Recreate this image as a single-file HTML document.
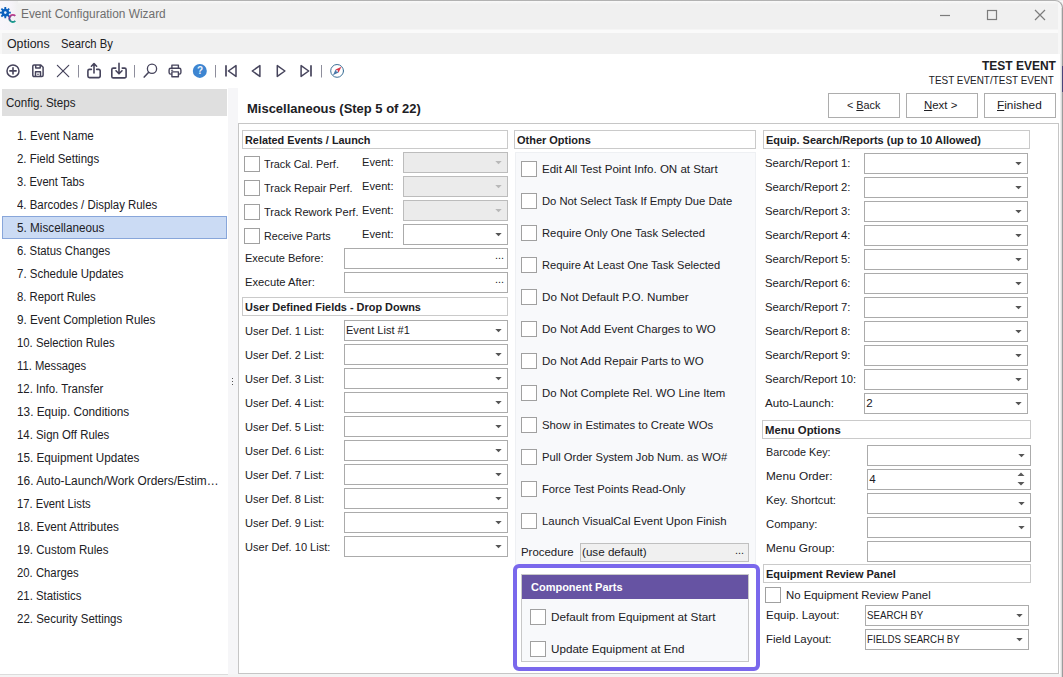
<!DOCTYPE html>
<html lang="en"><head><meta charset="utf-8"><title>Event Configuration Wizard</title>
<style>
html,body{margin:0;padding:0;background:#fff;}
body{width:1063px;height:677px;position:relative;overflow:hidden;font-family:"Liberation Sans", sans-serif;}
.b{position:absolute;box-sizing:border-box;}
.t{position:absolute;white-space:nowrap;transform-origin:0 0;line-height:16px;height:16px;color:#202024;font-family:"Liberation Sans", sans-serif;}
u{text-decoration:underline;text-underline-offset:1px;}
</style></head><body>
<div class="b" style="left:0px;top:0px;width:1063px;height:677px;background:#ffffff;"></div>
<div class="b" style="left:0px;top:0px;width:1063px;height:30px;background:#f0f0f0;"></div>
<div class="b" style="left:0px;top:1px;width:1063px;height:3px;background:linear-gradient(180deg,#f9f9f9,#f1f1f1);"></div>
<div class="b" style="left:0px;top:29px;width:1063px;height:1px;background:#f5f5f5;"></div>
<div class="b" style="left:0px;top:30px;width:1063px;height:3px;background:#fafafa;"></div>
<div class="b" style="left:0px;top:33px;width:1063px;height:21px;background:#f0f0f0;"></div>
<div class="b" style="left:0px;top:33px;width:2px;height:21px;background:#f8f8f8;"></div>
<span class="t" style="top:6px;font-size:12px;color:#6e6e6e;left:21.1px;transform:scaleX(0.9907);">Event Configuration Wizard</span>
<span class="t" style="top:36px;font-size:12px;left:6.8px;transform:scaleX(1.0301);">Options</span>
<span class="t" style="top:36px;font-size:12px;left:60.6px;transform:scaleX(0.9357);">Search By</span>
<div class="b" style="left:0px;top:1px;width:18px;height:29px;background:linear-gradient(90deg,#f8f6fb 0,#f6f4f9 60%,#f0f0f0 100%);"></div>
<svg class="b" style="left:0;top:0" width="18" height="26" viewBox="0 0 18 26">
<defs><linearGradient id="cg" x1="0" y1="0" x2="0" y2="1"><stop offset="0" stop-color="#c0408c"/><stop offset="0.5" stop-color="#5a3c90"/><stop offset="1" stop-color="#15a08c"/></linearGradient></defs>
<path d="M4.41 7.07L6.19 7.07L6.26 8.82L7.29 9.25L8.58 8.06L9.84 9.32L8.65 10.61L9.08 11.64L10.83 11.71L10.83 13.49L9.08 13.56L8.65 14.59L9.84 15.88L8.58 17.14L7.29 15.95L6.26 16.38L6.19 18.13L4.41 18.13L4.34 16.38L3.31 15.95L2.02 17.14L0.76 15.88L1.95 14.59L1.52 13.56L-0.23 13.49L-0.23 11.71L1.52 11.64L1.95 10.61L0.76 9.32L2.02 8.06L3.31 9.25L4.34 8.82z" fill="#0b5fbd"/><circle cx="5.3" cy="12.6" r="1.300" fill="#e8f2ff"/>
<path d="M15.300 15.900a3.500 3.500 0 1 0 0 5" fill="none" stroke="url(#cg)" stroke-width="2"/>
</svg>
<svg class="b" style="left:930px;top:4px" width="125" height="22" viewBox="0 0 125 22" fill="none" stroke="#7c7c7c" stroke-width="1.2">
<path d="M10 11.5h10"/><rect x="57.5" y="6.5" width="9" height="9"/><path d="M105 6l10 10M115 6l-10 10"/></svg>
<svg class="b" style="left:0;top:56px" width="360" height="30" viewBox="0 0 360 30" fill="none" stroke="#46445c" stroke-width="1.5" stroke-linejoin="round" stroke-linecap="round">
<circle cx="13" cy="14.9" r="6"/><path d="M13 11.8v6.200M9.900 14.900h6.200" stroke-width="1.600"/>
<path d="M34 9h6.800l2.300 2.300v8a1.200 1.200 0 0 1-1.200 1.200h-7.900a1.200 1.200 0 0 1-1.200-1.200v-9.100a1.200 1.200 0 0 1 1.200-1.200zM35.700 9.200v2.700h4.500v-2.700M35.500 20.300v-4.500h5v4.500" stroke-linecap="butt"/>
<circle cx="38" cy="18.300" r="0.800" fill="#46445c" stroke="none"/>
<path d="M57.400 9.300l11.300 11.400M68.700 9.300l-11.300 11.400" stroke-width="1.200"/>
<path d="M78.500 9v12.500M134.500 9v12.500M215.500 9v12.500M321.500 9v12.500" stroke="#8e8e9c" stroke-width="1" stroke-linecap="butt"/>
<path d="M91.400 13.400H89.400a1.500 1.500 0 0 0-1.500 1.500V20.100a1.500 1.500 0 0 0 1.500 1.500H98.700a1.500 1.500 0 0 0 1.500-1.500V14.900a1.500 1.500 0 0 0-1.500-1.500H96.700M94 17V8M91.400 10.200L94 7.600l2.600 2.600" stroke-width="1.600"/>
<path d="M115.800 12.100H113.300a1.500 1.500 0 0 0-1.500 1.500V20.400a1.500 1.500 0 0 0 1.500 1.500H124.600a1.500 1.500 0 0 0 1.500-1.500V13.600a1.500 1.500 0 0 0-1.500-1.500H122.200M119 7.300V17.500M116 14.800l3 3 3-3" stroke-width="1.600"/>
<circle cx="152" cy="12.700" r="4.600" stroke-width="1.300"/><path d="M148.700 16.200l-4.500 4.900" stroke-width="1.500"/>
<path d="M171.900 12.200V9.100h6.500v3.100" stroke-width="1.400"/>
<rect x="169.100" y="12.300" width="11.800" height="5.800" rx="1.600" stroke-width="1.400"/>
<rect x="171.900" y="15.900" width="6.500" height="4.800" fill="#fff" stroke-width="1.400"/>
<path d="M171.500 14.300h1.200" stroke-width="1.100"/>
<circle cx="199.800" cy="14.900" r="7" fill="#3d85d1" stroke="none"/>
<path d="M226 9.200v11.400" stroke-width="1.700" stroke-linecap="butt"/><path d="M236 9.600v10.800l-7.600-5.400z"/>
<path d="M259.900 9.600v10.800l-7.600-5.400z"/>
<path d="M277.300 9.600v10.800l7.600-5.400z"/>
<path d="M301.100 9.600v10.800l7.600-5.400z"/><path d="M311 9.200v11.400" stroke-width="1.700" stroke-linecap="butt"/>
<circle cx="337.100" cy="14.900" r="6.400" stroke="#3b6f96" stroke-width="1"/>
<path d="M341.400 10.700l-5.800 2.700 3 3z" fill="#d8384a" stroke="none"/><path d="M332.900 19.200l2.700-5.800 3 3z" fill="#4a78a8" stroke="none"/>
<circle cx="337.100" cy="14.900" r="0.800" fill="#fff" stroke="none"/>
</svg>
<span class="t" style="top:62.6px;font-size:10px;color:#eef4fb;left:196.9px;font-weight:bold;">?</span>
<span class="t" style="top:57.5px;font-size:12.8px;right:7.5px;transform-origin:100% 0;font-weight:bold;transform:scaleX(0.9376);">TEST EVENT</span>
<span class="t" style="top:72px;font-size:11.6px;right:9px;transform-origin:100% 0;transform:scaleX(0.8573);">TEST EVENT/TEST EVENT</span>
<div class="b" style="left:2px;top:89px;width:225px;height:27px;background:#dfdfdf;"></div>
<span class="t" style="top:95px;font-size:12px;left:5.9px;transform:scaleX(0.9646);">Config. Steps</span>
<div class="b" style="left:2px;top:216px;width:225px;height:23px;background:#cbdbf4;border:1px solid #88a6da;"></div>
<span class="t" style="top:128px;font-size:12px;left:16.9px;transform:scaleX(0.9676);">1. Event Name</span>
<span class="t" style="top:151px;font-size:12px;left:16.9px;transform:scaleX(0.9542);">2. Field Settings</span>
<span class="t" style="top:174px;font-size:12px;left:16.9px;transform:scaleX(0.9284);">3. Event Tabs</span>
<span class="t" style="top:197px;font-size:12px;left:16.9px;transform:scaleX(0.9512);">4. Barcodes / Display Rules</span>
<span class="t" style="top:220px;font-size:12px;left:16.9px;transform:scaleX(0.9779);">5. Miscellaneous</span>
<span class="t" style="top:243px;font-size:12px;left:16.9px;transform:scaleX(0.9440);">6. Status Changes</span>
<span class="t" style="top:266px;font-size:12px;left:16.9px;transform:scaleX(0.9559);">7. Schedule Updates</span>
<span class="t" style="top:289px;font-size:12px;left:16.9px;transform:scaleX(0.9428);">8. Report Rules</span>
<span class="t" style="top:312px;font-size:12px;left:16.9px;transform:scaleX(0.9742);">9. Event Completion Rules</span>
<span class="t" style="top:335px;font-size:12px;left:16.9px;transform:scaleX(0.9440);">10. Selection Rules</span>
<span class="t" style="top:358px;font-size:12px;left:16.9px;transform:scaleX(0.9375);">11. Messages</span>
<span class="t" style="top:381px;font-size:12px;left:16.9px;transform:scaleX(0.9513);">12. Info. Transfer</span>
<span class="t" style="top:404px;font-size:12px;left:16.9px;transform:scaleX(0.9836);">13. Equip. Conditions</span>
<span class="t" style="top:427px;font-size:12px;left:16.9px;transform:scaleX(0.9499);">14. Sign Off Rules</span>
<span class="t" style="top:450px;font-size:12px;left:16.9px;transform:scaleX(0.9760);">15. Equipment Updates</span>
<span class="t" style="top:473px;font-size:12px;left:16.9px;transform:scaleX(0.9886);">16. Auto-Launch/Work Orders/Estim…</span>
<span class="t" style="top:496px;font-size:12px;left:16.9px;transform:scaleX(0.9364);">17. Event Lists</span>
<span class="t" style="top:519px;font-size:12px;left:16.9px;transform:scaleX(0.9788);">18. Event Attributes</span>
<span class="t" style="top:542px;font-size:12px;left:16.9px;transform:scaleX(0.9583);">19. Custom Rules</span>
<span class="t" style="top:565px;font-size:12px;left:16.9px;transform:scaleX(0.9438);">20. Charges</span>
<span class="t" style="top:588px;font-size:12px;left:16.9px;transform:scaleX(0.9467);">21. Statistics</span>
<span class="t" style="top:611px;font-size:12px;left:16.9px;transform:scaleX(0.9559);">22. Security Settings</span>
<div class="b" style="left:228px;top:88px;width:10px;height:589px;background:#f6f6f8;"></div>
<div class="b" style="left:232px;top:378px;width:1px;height:1px;background:#555;"></div>
<div class="b" style="left:232px;top:381px;width:1px;height:1px;background:#555;"></div>
<div class="b" style="left:232px;top:384px;width:1px;height:1px;background:#555;"></div>
<span class="t" style="top:100.5px;font-size:12.8px;left:246.8px;font-weight:bold;transform:scaleX(1.0141);">Miscellaneous (Step 5 of 22)</span>
<div class="b" style="left:828px;top:93px;width:72px;height:25px;background:#fff;border:1px solid #adadad;"></div>
<span class="t" style="top:96.7px;font-size:11.6px;left:846.9px;transform:scaleX(0.9338);">&lt; <u>B</u>ack</span>
<div class="b" style="left:906px;top:93px;width:72px;height:25px;background:#fff;border:1px solid #adadad;"></div>
<span class="t" style="top:96.7px;font-size:11.6px;left:924.3px;transform:scaleX(0.9843);"><u>N</u>ext &gt;</span>
<div class="b" style="left:984px;top:93px;width:72px;height:25px;background:#fff;border:1px solid #adadad;"></div>
<span class="t" style="top:96.7px;font-size:11.6px;left:996.5px;transform:scaleX(1.0200);"><u>F</u>inished</span>
<div class="b" style="left:238px;top:123px;width:821px;height:551px;background:#fff;border:1px solid #c6c6c6;"></div>
<div class="b" style="left:242px;top:130px;width:266px;height:19px;background:#fff;border:1px solid #cacaca;"></div>
<span class="t" style="top:132px;font-size:11.6px;left:244.8px;font-weight:bold;transform:scaleX(0.9365);">Related Events / Launch</span>
<div class="b" style="left:244px;top:156px;width:16px;height:16px;background:#fff;border:1px solid #a0a0a0;"></div>
<span class="t" style="top:156px;font-size:11.6px;left:264.3px;transform:scaleX(0.9351);">Track Cal. Perf.</span>
<span class="t" style="top:154px;font-size:11.6px;left:361.9px;transform:scaleX(0.9584);">Event:</span>
<div class="b" style="left:403px;top:152px;width:105px;height:21px;background:#ebebeb;border:1px solid #bcbcbc;"></div>
<svg class="b" style="left:494.5px;top:161.0px" width="7" height="4" viewBox="0 0 7 4"><path d="M0.3 0h6.4L3.5 3.3z" fill="#b8b8b8"/></svg>
<div class="b" style="left:244px;top:180px;width:16px;height:16px;background:#fff;border:1px solid #a0a0a0;"></div>
<span class="t" style="top:180px;font-size:11.6px;left:264.3px;transform:scaleX(0.9452);">Track Repair Perf.</span>
<span class="t" style="top:178px;font-size:11.6px;left:361.9px;transform:scaleX(0.9584);">Event:</span>
<div class="b" style="left:403px;top:176px;width:105px;height:21px;background:#ebebeb;border:1px solid #bcbcbc;"></div>
<svg class="b" style="left:494.5px;top:185.0px" width="7" height="4" viewBox="0 0 7 4"><path d="M0.3 0h6.4L3.5 3.3z" fill="#b8b8b8"/></svg>
<div class="b" style="left:244px;top:204px;width:16px;height:16px;background:#fff;border:1px solid #a0a0a0;"></div>
<span class="t" style="top:204px;font-size:11.6px;left:264.3px;transform:scaleX(0.9567);">Track Rework Perf.</span>
<span class="t" style="top:202px;font-size:11.6px;left:361.9px;transform:scaleX(0.9584);">Event:</span>
<div class="b" style="left:403px;top:200px;width:105px;height:21px;background:#ebebeb;border:1px solid #bcbcbc;"></div>
<svg class="b" style="left:494.5px;top:209.0px" width="7" height="4" viewBox="0 0 7 4"><path d="M0.3 0h6.4L3.5 3.3z" fill="#b8b8b8"/></svg>
<div class="b" style="left:244px;top:228px;width:16px;height:16px;background:#fff;border:1px solid #a0a0a0;"></div>
<span class="t" style="top:228px;font-size:11.6px;left:264.3px;transform:scaleX(0.9243);">Receive Parts</span>
<span class="t" style="top:226px;font-size:11.6px;left:361.9px;transform:scaleX(0.9584);">Event:</span>
<div class="b" style="left:403px;top:224px;width:105px;height:21px;background:#fff;border:1px solid #ababab;"></div>
<svg class="b" style="left:494.5px;top:233.0px" width="7" height="4" viewBox="0 0 7 4"><path d="M0.3 0h6.4L3.5 3.3z" fill="#555"/></svg>
<span class="t" style="top:250px;font-size:11.6px;left:244.8px;transform:scaleX(0.9516);">Execute Before:</span>
<div class="b" style="left:344px;top:248px;width:164px;height:21px;background:#fff;border:1px solid #ababab;"></div>
<span class="t" style="top:247px;font-size:11px;color:#222;left:494.6px;transform:scaleX(0.9816);">...</span>
<span class="t" style="top:274px;font-size:11.6px;left:244.8px;transform:scaleX(0.9668);">Execute After:</span>
<div class="b" style="left:344px;top:272px;width:164px;height:21px;background:#fff;border:1px solid #ababab;"></div>
<span class="t" style="top:271px;font-size:11px;color:#222;left:494.6px;transform:scaleX(0.9816);">...</span>
<div class="b" style="left:242px;top:297px;width:266px;height:19px;background:#fff;border:1px solid #cacaca;"></div>
<span class="t" style="top:299px;font-size:11.6px;left:244.8px;font-weight:bold;transform:scaleX(0.9416);">User Defined Fields - Drop Downs</span>
<span class="t" style="top:323px;font-size:11.6px;left:244.8px;transform:scaleX(0.9553);">User Def. 1 List:</span>
<div class="b" style="left:344px;top:320px;width:164px;height:21px;background:#fff;border:1px solid #ababab;"></div>
<svg class="b" style="left:494.5px;top:329.0px" width="7" height="4" viewBox="0 0 7 4"><path d="M0.3 0h6.4L3.5 3.3z" fill="#555"/></svg>
<span class="t" style="top:322px;font-size:11.6px;left:346px;transform:scaleX(0.9519);">Event List #1</span>
<span class="t" style="top:347px;font-size:11.6px;left:244.8px;transform:scaleX(0.9553);">User Def. 2 List:</span>
<div class="b" style="left:344px;top:344px;width:164px;height:21px;background:#fff;border:1px solid #ababab;"></div>
<svg class="b" style="left:494.5px;top:353.0px" width="7" height="4" viewBox="0 0 7 4"><path d="M0.3 0h6.4L3.5 3.3z" fill="#555"/></svg>
<span class="t" style="top:371px;font-size:11.6px;left:244.8px;transform:scaleX(0.9553);">User Def. 3 List:</span>
<div class="b" style="left:344px;top:368px;width:164px;height:21px;background:#fff;border:1px solid #ababab;"></div>
<svg class="b" style="left:494.5px;top:377.0px" width="7" height="4" viewBox="0 0 7 4"><path d="M0.3 0h6.4L3.5 3.3z" fill="#555"/></svg>
<span class="t" style="top:395px;font-size:11.6px;left:244.8px;transform:scaleX(0.9553);">User Def. 4 List:</span>
<div class="b" style="left:344px;top:392px;width:164px;height:21px;background:#fff;border:1px solid #ababab;"></div>
<svg class="b" style="left:494.5px;top:401.0px" width="7" height="4" viewBox="0 0 7 4"><path d="M0.3 0h6.4L3.5 3.3z" fill="#555"/></svg>
<span class="t" style="top:419px;font-size:11.6px;left:244.8px;transform:scaleX(0.9553);">User Def. 5 List:</span>
<div class="b" style="left:344px;top:416px;width:164px;height:21px;background:#fff;border:1px solid #ababab;"></div>
<svg class="b" style="left:494.5px;top:425.0px" width="7" height="4" viewBox="0 0 7 4"><path d="M0.3 0h6.4L3.5 3.3z" fill="#555"/></svg>
<span class="t" style="top:443px;font-size:11.6px;left:244.8px;transform:scaleX(0.9553);">User Def. 6 List:</span>
<div class="b" style="left:344px;top:440px;width:164px;height:21px;background:#fff;border:1px solid #ababab;"></div>
<svg class="b" style="left:494.5px;top:449.0px" width="7" height="4" viewBox="0 0 7 4"><path d="M0.3 0h6.4L3.5 3.3z" fill="#555"/></svg>
<span class="t" style="top:467px;font-size:11.6px;left:244.8px;transform:scaleX(0.9553);">User Def. 7 List:</span>
<div class="b" style="left:344px;top:464px;width:164px;height:21px;background:#fff;border:1px solid #ababab;"></div>
<svg class="b" style="left:494.5px;top:473.0px" width="7" height="4" viewBox="0 0 7 4"><path d="M0.3 0h6.4L3.5 3.3z" fill="#555"/></svg>
<span class="t" style="top:491px;font-size:11.6px;left:244.8px;transform:scaleX(0.9553);">User Def. 8 List:</span>
<div class="b" style="left:344px;top:488px;width:164px;height:21px;background:#fff;border:1px solid #ababab;"></div>
<svg class="b" style="left:494.5px;top:497.0px" width="7" height="4" viewBox="0 0 7 4"><path d="M0.3 0h6.4L3.5 3.3z" fill="#555"/></svg>
<span class="t" style="top:515px;font-size:11.6px;left:244.8px;transform:scaleX(0.9553);">User Def. 9 List:</span>
<div class="b" style="left:344px;top:512px;width:164px;height:21px;background:#fff;border:1px solid #ababab;"></div>
<svg class="b" style="left:494.5px;top:521.0px" width="7" height="4" viewBox="0 0 7 4"><path d="M0.3 0h6.4L3.5 3.3z" fill="#555"/></svg>
<span class="t" style="top:539px;font-size:11.6px;left:244.8px;transform:scaleX(0.9535);">User Def. 10 List:</span>
<div class="b" style="left:344px;top:536px;width:164px;height:21px;background:#fff;border:1px solid #ababab;"></div>
<svg class="b" style="left:494.5px;top:545.0px" width="7" height="4" viewBox="0 0 7 4"><path d="M0.3 0h6.4L3.5 3.3z" fill="#555"/></svg>
<div class="b" style="left:514px;top:130px;width:242px;height:19px;background:#fff;border:1px solid #cacaca;"></div>
<span class="t" style="top:132px;font-size:11.6px;left:516.8px;font-weight:bold;transform:scaleX(0.9469);">Other Options</span>
<div class="b" style="left:515px;top:152px;width:241px;height:414px;background:#f8f9fb;border:1px solid #eef0f3;"></div>
<div class="b" style="left:521px;top:161px;width:16px;height:16px;background:#fff;border:1px solid #a0a0a0;"></div>
<span class="t" style="top:161px;font-size:11.6px;left:541.8px;transform:scaleX(0.9960);">Edit All Test Point Info. ON at Start</span>
<div class="b" style="left:521px;top:193px;width:16px;height:16px;background:#fff;border:1px solid #a0a0a0;"></div>
<span class="t" style="top:193px;font-size:11.6px;left:541.8px;transform:scaleX(0.9688);">Do Not Select Task If Empty Due Date</span>
<div class="b" style="left:521px;top:225px;width:16px;height:16px;background:#fff;border:1px solid #a0a0a0;"></div>
<span class="t" style="top:225px;font-size:11.6px;left:541.8px;transform:scaleX(0.9703);">Require Only One Task Selected</span>
<div class="b" style="left:521px;top:257px;width:16px;height:16px;background:#fff;border:1px solid #a0a0a0;"></div>
<span class="t" style="top:257px;font-size:11.6px;left:541.8px;transform:scaleX(0.9578);">Require At Least One Task Selected</span>
<div class="b" style="left:521px;top:289px;width:16px;height:16px;background:#fff;border:1px solid #a0a0a0;"></div>
<span class="t" style="top:289px;font-size:11.6px;left:541.8px;transform:scaleX(1.0082);">Do Not Default P.O. Number</span>
<div class="b" style="left:521px;top:321px;width:16px;height:16px;background:#fff;border:1px solid #a0a0a0;"></div>
<span class="t" style="top:321px;font-size:11.6px;left:541.8px;transform:scaleX(0.9908);">Do Not Add Event Charges to WO</span>
<div class="b" style="left:521px;top:353px;width:16px;height:16px;background:#fff;border:1px solid #a0a0a0;"></div>
<span class="t" style="top:353px;font-size:11.6px;left:541.8px;transform:scaleX(0.9917);">Do Not Add Repair Parts to WO</span>
<div class="b" style="left:521px;top:385px;width:16px;height:16px;background:#fff;border:1px solid #a0a0a0;"></div>
<span class="t" style="top:385px;font-size:11.6px;left:541.8px;transform:scaleX(0.9810);">Do Not Complete Rel. WO Line Item</span>
<div class="b" style="left:521px;top:417px;width:16px;height:16px;background:#fff;border:1px solid #a0a0a0;"></div>
<span class="t" style="top:417px;font-size:11.6px;left:541.8px;transform:scaleX(0.9763);">Show in Estimates to Create WOs</span>
<div class="b" style="left:521px;top:449px;width:16px;height:16px;background:#fff;border:1px solid #a0a0a0;"></div>
<span class="t" style="top:449px;font-size:11.6px;left:541.8px;transform:scaleX(0.9646);">Pull Order System Job Num. as WO#</span>
<div class="b" style="left:521px;top:481px;width:16px;height:16px;background:#fff;border:1px solid #a0a0a0;"></div>
<span class="t" style="top:481px;font-size:11.6px;left:541.8px;transform:scaleX(0.9690);">Force Test Points Read-Only</span>
<div class="b" style="left:521px;top:513px;width:16px;height:16px;background:#fff;border:1px solid #a0a0a0;"></div>
<span class="t" style="top:513px;font-size:11.6px;left:541.8px;transform:scaleX(0.9821);">Launch VisualCal Event Upon Finish</span>
<span class="t" style="top:544px;font-size:11.6px;left:520.5px;transform:scaleX(0.9852);">Procedure</span>
<div class="b" style="left:580px;top:543px;width:169px;height:19px;background:#f0f0f0;border:1px solid #c0c0c0;"></div>
<span class="t" style="top:544px;font-size:11.6px;left:581.9px;transform:scaleX(1.0040);">(use default)</span>
<span class="t" style="top:541.5px;font-size:11px;color:#222;left:735.3px;transform:scaleX(0.9816);">...</span>
<div class="b" style="left:513px;top:564px;width:247px;height:107px;border:4px solid #7a68ec;border-radius:6px;background:#fff"></div>
<div class="b" style="left:521px;top:574px;width:228px;height:88px;background:#f8f9fb;border:1px solid #c8c8c8;"></div>
<div class="b" style="left:522px;top:575px;width:226px;height:24px;background:#6653a3;"></div>
<span class="t" style="top:579px;font-size:11.6px;color:#fff;left:530.8px;font-weight:bold;transform:scaleX(0.9480);">Component Parts</span>
<div class="b" style="left:530px;top:609px;width:16px;height:16px;background:#fff;border:1px solid #a0a0a0;"></div>
<span class="t" style="top:609px;font-size:11.6px;left:551px;transform:scaleX(1.0124);">Default from Equipment at Start</span>
<div class="b" style="left:530px;top:641px;width:16px;height:16px;background:#fff;border:1px solid #a0a0a0;"></div>
<span class="t" style="top:641px;font-size:11.6px;left:551px;transform:scaleX(1.0055);">Update Equipment at End</span>
<div class="b" style="left:763px;top:130px;width:267px;height:19px;background:#fff;border:1px solid #cacaca;"></div>
<span class="t" style="top:132px;font-size:11.6px;left:765.8px;font-weight:bold;transform:scaleX(0.9464);">Equip. Search/Reports (up to 10 Allowed)</span>
<span class="t" style="top:155px;font-size:11.6px;left:765px;transform:scaleX(0.9744);">Search/Report 1:</span>
<div class="b" style="left:864px;top:153px;width:164px;height:21px;background:#fff;border:1px solid #ababab;"></div>
<svg class="b" style="left:1014.5px;top:162.0px" width="7" height="4" viewBox="0 0 7 4"><path d="M0.3 0h6.4L3.5 3.3z" fill="#555"/></svg>
<span class="t" style="top:179px;font-size:11.6px;left:765px;transform:scaleX(0.9744);">Search/Report 2:</span>
<div class="b" style="left:864px;top:177px;width:164px;height:21px;background:#fff;border:1px solid #ababab;"></div>
<svg class="b" style="left:1014.5px;top:186.0px" width="7" height="4" viewBox="0 0 7 4"><path d="M0.3 0h6.4L3.5 3.3z" fill="#555"/></svg>
<span class="t" style="top:203px;font-size:11.6px;left:765px;transform:scaleX(0.9744);">Search/Report 3:</span>
<div class="b" style="left:864px;top:201px;width:164px;height:21px;background:#fff;border:1px solid #ababab;"></div>
<svg class="b" style="left:1014.5px;top:210.0px" width="7" height="4" viewBox="0 0 7 4"><path d="M0.3 0h6.4L3.5 3.3z" fill="#555"/></svg>
<span class="t" style="top:227px;font-size:11.6px;left:765px;transform:scaleX(0.9744);">Search/Report 4:</span>
<div class="b" style="left:864px;top:225px;width:164px;height:21px;background:#fff;border:1px solid #ababab;"></div>
<svg class="b" style="left:1014.5px;top:234.0px" width="7" height="4" viewBox="0 0 7 4"><path d="M0.3 0h6.4L3.5 3.3z" fill="#555"/></svg>
<span class="t" style="top:251px;font-size:11.6px;left:765px;transform:scaleX(0.9744);">Search/Report 5:</span>
<div class="b" style="left:864px;top:249px;width:164px;height:21px;background:#fff;border:1px solid #ababab;"></div>
<svg class="b" style="left:1014.5px;top:258.0px" width="7" height="4" viewBox="0 0 7 4"><path d="M0.3 0h6.4L3.5 3.3z" fill="#555"/></svg>
<span class="t" style="top:275px;font-size:11.6px;left:765px;transform:scaleX(0.9744);">Search/Report 6:</span>
<div class="b" style="left:864px;top:273px;width:164px;height:21px;background:#fff;border:1px solid #ababab;"></div>
<svg class="b" style="left:1014.5px;top:282.0px" width="7" height="4" viewBox="0 0 7 4"><path d="M0.3 0h6.4L3.5 3.3z" fill="#555"/></svg>
<span class="t" style="top:299px;font-size:11.6px;left:765px;transform:scaleX(0.9744);">Search/Report 7:</span>
<div class="b" style="left:864px;top:297px;width:164px;height:21px;background:#fff;border:1px solid #ababab;"></div>
<svg class="b" style="left:1014.5px;top:306.0px" width="7" height="4" viewBox="0 0 7 4"><path d="M0.3 0h6.4L3.5 3.3z" fill="#555"/></svg>
<span class="t" style="top:323px;font-size:11.6px;left:765px;transform:scaleX(0.9744);">Search/Report 8:</span>
<div class="b" style="left:864px;top:321px;width:164px;height:21px;background:#fff;border:1px solid #ababab;"></div>
<svg class="b" style="left:1014.5px;top:330.0px" width="7" height="4" viewBox="0 0 7 4"><path d="M0.3 0h6.4L3.5 3.3z" fill="#555"/></svg>
<span class="t" style="top:347px;font-size:11.6px;left:765px;transform:scaleX(0.9744);">Search/Report 9:</span>
<div class="b" style="left:864px;top:345px;width:164px;height:21px;background:#fff;border:1px solid #ababab;"></div>
<svg class="b" style="left:1014.5px;top:354.0px" width="7" height="4" viewBox="0 0 7 4"><path d="M0.3 0h6.4L3.5 3.3z" fill="#555"/></svg>
<span class="t" style="top:371px;font-size:11.6px;left:765px;transform:scaleX(0.9682);">Search/Report 10:</span>
<div class="b" style="left:864px;top:369px;width:164px;height:21px;background:#fff;border:1px solid #ababab;"></div>
<svg class="b" style="left:1014.5px;top:378.0px" width="7" height="4" viewBox="0 0 7 4"><path d="M0.3 0h6.4L3.5 3.3z" fill="#555"/></svg>
<span class="t" style="top:395px;font-size:11.6px;left:765px;">Auto-Launch:</span>
<div class="b" style="left:864px;top:393px;width:164px;height:21px;background:#fff;border:1px solid #ababab;"></div>
<svg class="b" style="left:1014.5px;top:402.0px" width="7" height="4" viewBox="0 0 7 4"><path d="M0.3 0h6.4L3.5 3.3z" fill="#555"/></svg>
<span class="t" style="top:395px;font-size:11.6px;left:866.3px;">2</span>
<div class="b" style="left:762px;top:420px;width:269px;height:19px;background:#fff;border:1px solid #cacaca;"></div>
<span class="t" style="top:422px;font-size:11.6px;left:764.8px;font-weight:bold;transform:scaleX(0.9795);">Menu Options</span>
<span class="t" style="top:444px;font-size:11.6px;left:765.9px;transform:scaleX(0.9267);">Barcode Key:</span>
<div class="b" style="left:867px;top:445px;width:164px;height:21px;background:#fff;border:1px solid #ababab;"></div>
<svg class="b" style="left:1017.5px;top:454.0px" width="7" height="4" viewBox="0 0 7 4"><path d="M0.3 0h6.4L3.5 3.3z" fill="#555"/></svg>
<span class="t" style="top:468px;font-size:11.6px;left:765.9px;transform:scaleX(1.0218);">Menu Order:</span>
<div class="b" style="left:867px;top:469px;width:164px;height:21px;background:#fff;border:1px solid #ababab;"></div>
<span class="t" style="top:471px;font-size:11.6px;left:869.3px;">4</span>
<svg class="b" style="left:1017px;top:472px" width="8" height="14" viewBox="0 0 8 14"><path d="M0.5 4h7L4 0.5zM0.5 10h7L4 13.500z" fill="#5a5a5a"/></svg>
<span class="t" style="top:492px;font-size:11.6px;left:765.9px;transform:scaleX(0.9728);">Key. Shortcut:</span>
<div class="b" style="left:867px;top:493px;width:164px;height:21px;background:#fff;border:1px solid #ababab;"></div>
<svg class="b" style="left:1017.5px;top:502.0px" width="7" height="4" viewBox="0 0 7 4"><path d="M0.3 0h6.4L3.5 3.3z" fill="#555"/></svg>
<span class="t" style="top:516px;font-size:11.6px;left:765.9px;transform:scaleX(0.9728);">Company:</span>
<div class="b" style="left:867px;top:517px;width:164px;height:21px;background:#fff;border:1px solid #ababab;"></div>
<svg class="b" style="left:1017.5px;top:526.0px" width="7" height="4" viewBox="0 0 7 4"><path d="M0.3 0h6.4L3.5 3.3z" fill="#555"/></svg>
<span class="t" style="top:540px;font-size:11.6px;left:765.9px;transform:scaleX(1.0168);">Menu Group:</span>
<div class="b" style="left:867px;top:541px;width:164px;height:21px;background:#fff;border:1px solid #ababab;"></div>
<div class="b" style="left:763px;top:564px;width:268px;height:19px;background:#fff;border:1px solid #cacaca;"></div>
<span class="t" style="top:566px;font-size:11.6px;left:765.8px;font-weight:bold;transform:scaleX(0.9459);">Equipment Review Panel</span>
<div class="b" style="left:765px;top:587px;width:16px;height:16px;background:#fff;border:1px solid #a0a0a0;"></div>
<span class="t" style="top:587px;font-size:11.6px;left:785.8px;transform:scaleX(0.9805);">No Equipment Review Panel</span>
<span class="t" style="top:607px;font-size:11.6px;left:765.6px;transform:scaleX(0.9916);">Equip. Layout:</span>
<div class="b" style="left:865px;top:605px;width:164px;height:21px;background:#fff;border:1px solid #ababab;"></div>
<svg class="b" style="left:1015.5px;top:614.0px" width="7" height="4" viewBox="0 0 7 4"><path d="M0.3 0h6.4L3.5 3.3z" fill="#555"/></svg>
<span class="t" style="top:607px;font-size:11.6px;left:866.8px;transform:scaleX(0.8373);">SEARCH BY</span>
<span class="t" style="top:631px;font-size:11.6px;left:765.6px;transform:scaleX(0.9867);">Field Layout:</span>
<div class="b" style="left:865px;top:629px;width:164px;height:21px;background:#fff;border:1px solid #ababab;"></div>
<svg class="b" style="left:1015.5px;top:638.0px" width="7" height="4" viewBox="0 0 7 4"><path d="M0.3 0h6.4L3.5 3.3z" fill="#555"/></svg>
<span class="t" style="top:631px;font-size:11.6px;left:866.8px;transform:scaleX(0.8374);">FIELDS SEARCH BY</span>
<div class="b" style="left:0px;top:674px;width:1063px;height:3px;background:#f4f4f4;"></div>
<div class="b" style="left:0px;top:674px;width:228px;height:1px;background:#dcdcdc;"></div>
<div class="b" style="left:1058px;top:1px;width:4px;height:53px;background:#f7f7f7;"></div>
<div class="b" style="left:-10px;top:0;width:1073px;height:690px;border-top:1px solid #b2b2b2;border-right:1px solid #9c9c9c;border-radius:0 8px 8px 0;pointer-events:none"></div>
<div class="b" style="left:1061px;top:8px;width:1px;height:669px;background:#dcdcdc;"></div>
<div class="b" style="left:1060px;top:54px;width:1px;height:623px;background:#f0f0f0;"></div>
<div class="b" style="left:1062px;top:66px;width:1px;height:26px;background:#4a467a;"></div>
</body></html>
